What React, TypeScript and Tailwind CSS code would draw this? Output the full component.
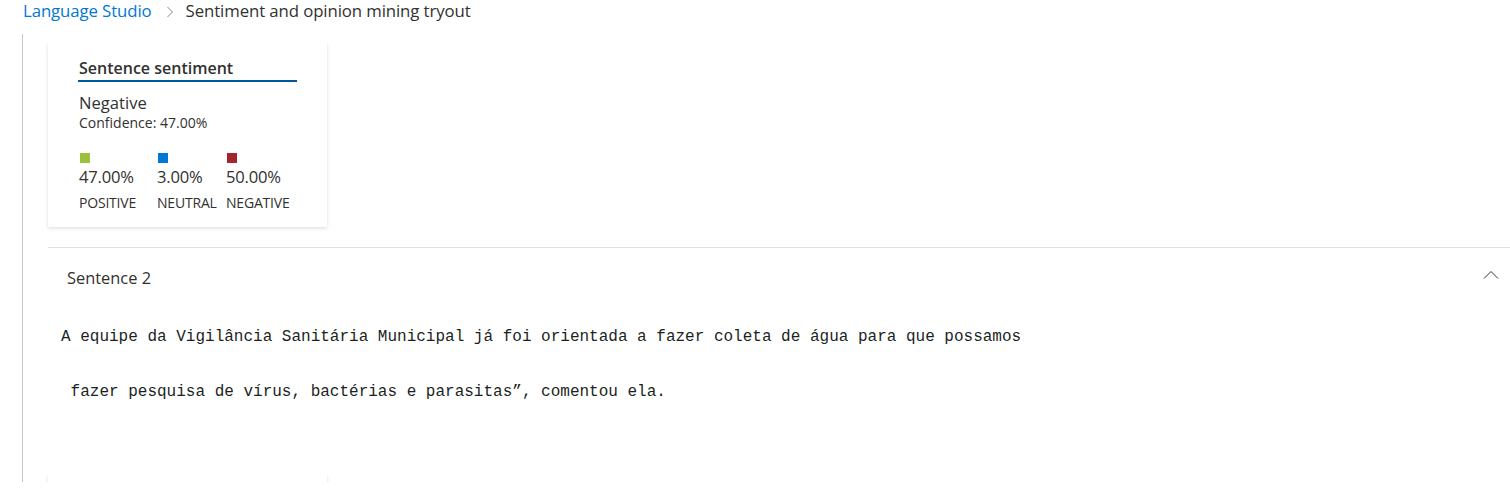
import React from "react";

export default function App() {
  return (
    <div
      className="w-[1510px] h-[502px] bg-white overflow-hidden text-[#323130]"
      style={{ fontFamily: '"Open Sans", "Noto Sans", sans-serif' }}
    >
      <div className="h-[34px] flex items-start pl-[23px] pt-[0px] text-[16.8px] leading-[22px]">
        <span className="text-[#0078d4] tracking-[-0.1px]">Language Studio</span>
        <svg className="ml-[14px] mr-[12px] mt-[6px]" width="8" height="12" viewBox="0 0 8 12">
          <path d="M1.5 1 L6.5 6 L1.5 11" fill="none" stroke="#8a8886" strokeWidth="1" />
        </svg>
        <span className="tracking-[-0.1px]">Sentiment and opinion mining tryout</span>
      </div>
      <div className="ml-[22px] h-[448px] border-l border-[#c8c6c4] overflow-hidden pl-[25px]">
        <div className="pt-[8px]">
          <div className="w-[279px] h-[185px] bg-white shadow-[0_1.6px_3.6px_rgba(0,0,0,0.13),0_0.3px_0.9px_rgba(0,0,0,0.11)] pl-[30px] pt-[15px]">
            <div className="w-[219px] border-b-2 border-[#005a9e] pb-[1px] pl-[1px] text-[16px] leading-[22px] font-semibold">
              Sentence sentiment
            </div>
            <div className="pl-[1px] mt-[10px] text-[16.6px] leading-[22px]">Negative</div>
            <div className="pl-[1px] text-[14px] leading-[18px]">Confidence: 47.00%</div>
            <div className="flex mt-[21px] pl-[1px]">
              {[
                { c: "bg-[#9bc13c]", v: "47.00%", l: "POSITIVE", w: "w-[78px]" },
                { c: "bg-[#0078d4]", v: "3.00%", l: "NEUTRAL", w: "w-[69px]" },
                { c: "bg-[#a4262c]", v: "50.00%", l: "NEGATIVE", w: "w-[80px]" },
              ].map((s) => (
                <div key={s.l} className={s.w}>
                  <div className={`w-[10px] h-[10px] ml-[1px] ${s.c}`} />
                  <div className="text-[16.6px] leading-[22px] mt-[3px] tracking-[-0.2px]">{s.v}</div>
                  <div className="text-[14px] leading-[18px] mt-[6px] tracking-[-0.2px]">{s.l}</div>
                </div>
              ))}
            </div>
          </div>
        </div>
        <div className="mt-[20px] border-t border-[#e1dfdd]">
          <div className="h-[59px] flex items-center justify-between pl-[19px] pr-[11px]">
            <span className="text-[16.4px] leading-[22px] mt-[1px]">Sentence 2</span>
            <svg width="16" height="10" viewBox="0 0 16 10" className="-mt-[5px]">
              <path d="M1 8.5 L8 1.5 L15 8.5" fill="none" stroke="#323130" strokeWidth="1" />
            </svg>
          </div>
          <div
            className="pl-[13px] pt-[19px] text-[16px] leading-[22px] text-[#201f1e] whitespace-pre"
            style={{ fontFamily: '"Liberation Mono", "DejaVu Sans Mono", monospace' }}
          >
            <div>A equipe da Vigilância Sanitária Municipal já foi orientada a fazer coleta de água para que possamos</div>
            <div className="mt-[33px]"> fazer pesquisa de vírus, bactérias e parasitas”, comentou ela.</div>
          </div>
          <div className="mt-[71px] w-[279px] h-[40px] bg-white shadow-[0_1.6px_3.6px_rgba(0,0,0,0.13),0_0.3px_0.9px_rgba(0,0,0,0.11)]" />
        </div>
      </div>
    </div>
  );
}
